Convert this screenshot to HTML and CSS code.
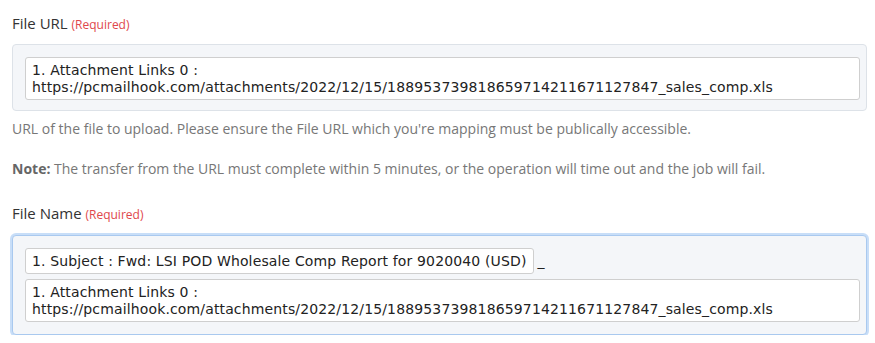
FILE: index.html
```html
<!DOCTYPE html>
<html>
<head>
<meta charset="utf-8">
<link rel="stylesheet" href="styles.css">
</head>
<body>
<div class="form">
  <div class="field">
    <label class="label">File URL <span class="req">(Required)</span></label>
    <div class="panel">
      <div class="entry">1. Attachment Links 0 :<br>https://pcmailhook.com/attachments/2022/12/15/188953739818659714211671127847_sales_comp.xls</div>
    </div>
    <p class="help">URL of the file to upload. Please ensure the File URL which you're mapping must be publically accessible.</p>
    <p class="help note-line"><b>Note:</b> The transfer from the URL must complete within 5 minutes, or the operation will time out and the job will fail.</p>
  </div>
  <div class="field field2">
    <label class="label">File Name <span class="req">(Required)</span></label>
    <div class="panel focus">
      <div class="row"><span class="entry token">1. Subject : Fwd: LSI POD Wholesale Comp Report for 9020040 (USD)</span><span class="sep">_</span></div>
      <div class="entry">1. Attachment Links 0 :<br>https://pcmailhook.com/attachments/2022/12/15/188953739818659714211671127847_sales_comp.xls</div>
      <div class="dropdown"></div>
    </div>
  </div>
</div>
</body>
</html>
```
FILE: styles.css
```css
html, body {
  margin: 0;
  padding: 0;
  background: #fff;
}
body {
  font-family: "Open Sans", Lato, sans-serif;
  color: #333;
  overflow: hidden;
}
.form {
  padding: 13px 0 0 12px;
  width: 855px;
}
.label {
  display: block;
  font-size: 15px;
  line-height: 21px;
  color: #333;
}
.req {
  font-size: 12px;
  color: #e0474c;
}
.panel {
  margin-top: 9px;
  background: #f4f6f9;
  border: 1px solid #dde2e8;
  border-radius: 4px;
  padding: 12px 6px 10px 12px;
  display: flex;
  flex-direction: column;
  gap: 5px;
  position: relative;
}
.entry {
  background: #fff;
  border: 1px solid #cfcfcf;
  border-radius: 3px;
  padding: 4px 6px 3px 6px;
  font-family: "DejaVu Sans", Verdana, sans-serif;
  font-size: 14px;
  letter-spacing: 0.14px;
  line-height: 17px;
  color: #222;
}
.row {
  display: flex;
  align-items: center;
}
.sep {
  font-family: "DejaVu Sans", Verdana, sans-serif;
  font-size: 14px;
  color: #222;
  margin-left: 4px;
  line-height: 17px;
}
.help {
  margin: 8px 0 0 0;
  font-size: 14px;
  line-height: 20px;
  color: #777;
}
.note-line {
  margin-top: 20px;
}
.note-line b {
  color: #666;
}
.field2 {
  margin-top: 24px;
}
.focus {
  margin-top: 10px;
  border-color: #a9c9ef;
  box-shadow: 0 0 0 2px #c8def8;
  padding-top: 12px;
  padding-bottom: 12px;
}
.dropdown {
  position: absolute;
  left: -1px;
  right: -3px;
  top: calc(100% + 1px);
  height: 40px;
  background: #fff;
  border-left: 1px solid #e6e6e6;
}
```
